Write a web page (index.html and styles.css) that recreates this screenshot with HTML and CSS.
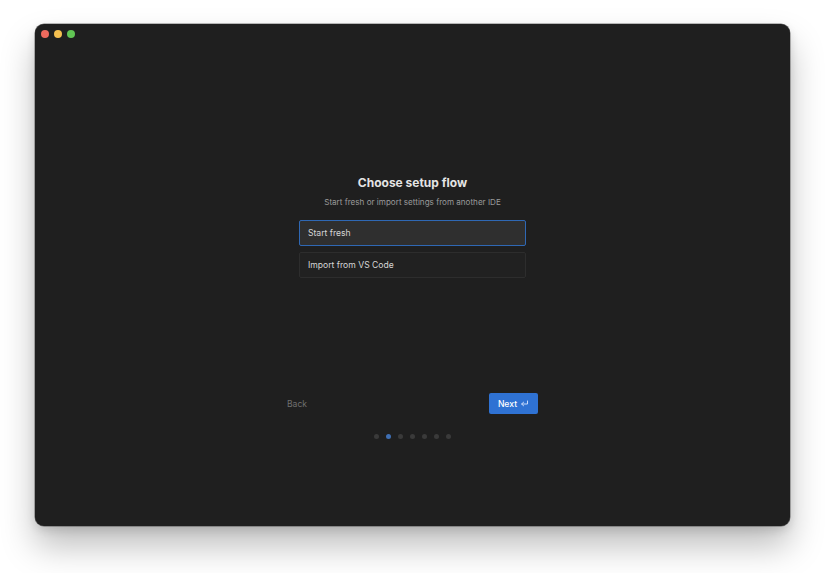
FILE: index.html
```html
<!DOCTYPE html>
<html>
<head>
<meta charset="utf-8">
<link rel="stylesheet" href="styles.css">
</head>
<body>
<div class="window">
  <div class="titlebar">
    <span class="light red"></span>
    <span class="light yellow"></span>
    <span class="light green"></span>
  </div>
  <div class="content">
    <h1 class="title">Choose setup flow</h1>
    <p class="subtitle">Start fresh or import settings from another IDE</p>
    <div class="options">
      <div class="option selected">Start fresh</div>
      <div class="option">Import from VS Code</div>
    </div>
    <div class="actions">
      <button class="back">Back</button>
      <button class="next">Next
        <svg class="enter" width="9" height="8" viewBox="0 0 9 8"><path d="M7.5 1v3H1.8M3.6 2.2 1.6 4l2 1.8" fill="none" stroke="currentColor" stroke-width="1" stroke-linecap="round" stroke-linejoin="round"/></svg>
      </button>
    </div>
    <div class="dots">
      <span class="dot"></span>
      <span class="dot active"></span>
      <span class="dot"></span>
      <span class="dot"></span>
      <span class="dot"></span>
      <span class="dot"></span>
      <span class="dot"></span>
    </div>
  </div>
</div>
</body>
</html>
```

FILE: styles.css
```css
html, body {
  margin: 0;
  padding: 0;
  background: #ffffff;
  width: 825px;
  height: 573px;
  overflow: hidden;
}
body {
  padding: 24px 0 0 35px;
  box-sizing: border-box;
  font-family: "Inter", "Liberation Sans", sans-serif;
}
.window {
  width: 755px;
  height: 502px;
  background: #1f1f1f;
  border-radius: 9px;
  box-shadow: 0 0 0 0.5px rgba(0,0,0,0.5), 0 20px 34px rgba(0,0,0,0.26), 0 4px 10px rgba(0,0,0,0.12);
  display: flex;
  flex-direction: column;
}
.titlebar {
  height: 20px;
  display: flex;
  align-items: center;
  gap: 5px;
  padding: 0 0 0 6px;
}
.light {
  width: 8px;
  height: 8px;
  border-radius: 50%;
  display: block;
}
.red { background: #ed6a5e; }
.yellow { background: #f4bf4f; }
.green { background: #61c554; }
.content {
  display: flex;
  flex-direction: column;
  align-items: center;
  padding-top: 131px;
}
.title {
  margin: 0;
  font-size: 12px;
  line-height: 16px;
  font-weight: 700;
  color: #e4e4e4;
}
.subtitle {
  margin: 5px 0 0;
  font-size: 8.1px;
  line-height: 12px;
  color: #9a9a9a;
}
.options {
  margin-top: 12px;
  width: 227px;
  display: flex;
  flex-direction: column;
  gap: 6px;
}
.option {
  box-sizing: border-box;
  height: 26px;
  border: 1px solid #2d2d2d;
  border-radius: 2px;
  background: #212121;
  color: #d6d6d6;
  font-size: 8.6px;
  line-height: 24px;
  padding-left: 8px;
}
.option.selected {
  border-color: #2f68b4;
  background: #2f2f2f;
}
.actions {
  margin-top: 115px;
  width: 251px;
  display: flex;
  justify-content: space-between;
  align-items: center;
}
button {
  font-family: inherit;
  border: none;
  cursor: pointer;
}
.back {
  background: transparent;
  color: #6f6f6f;
  font-size: 8.6px;
  height: 21px;
  padding: 0;
}
.next {
  background: #2f72d3;
  color: #ffffff;
  font-size: 8.6px;
  font-weight: 500;
  height: 21px;
  width: 49px;
  border-radius: 2px;
  display: flex;
  align-items: center;
  justify-content: center;
  gap: 3px;
  padding: 0;
}
.enter {
  color: #c8dafa;
}
.dots {
  margin-top: 20px;
  display: flex;
  gap: 7px;
}
.dot {
  width: 5px;
  height: 5px;
  border-radius: 50%;
  background: #3a3a3a;
  display: block;
}
.dot.active {
  background: #3f6fb3;
}
```
